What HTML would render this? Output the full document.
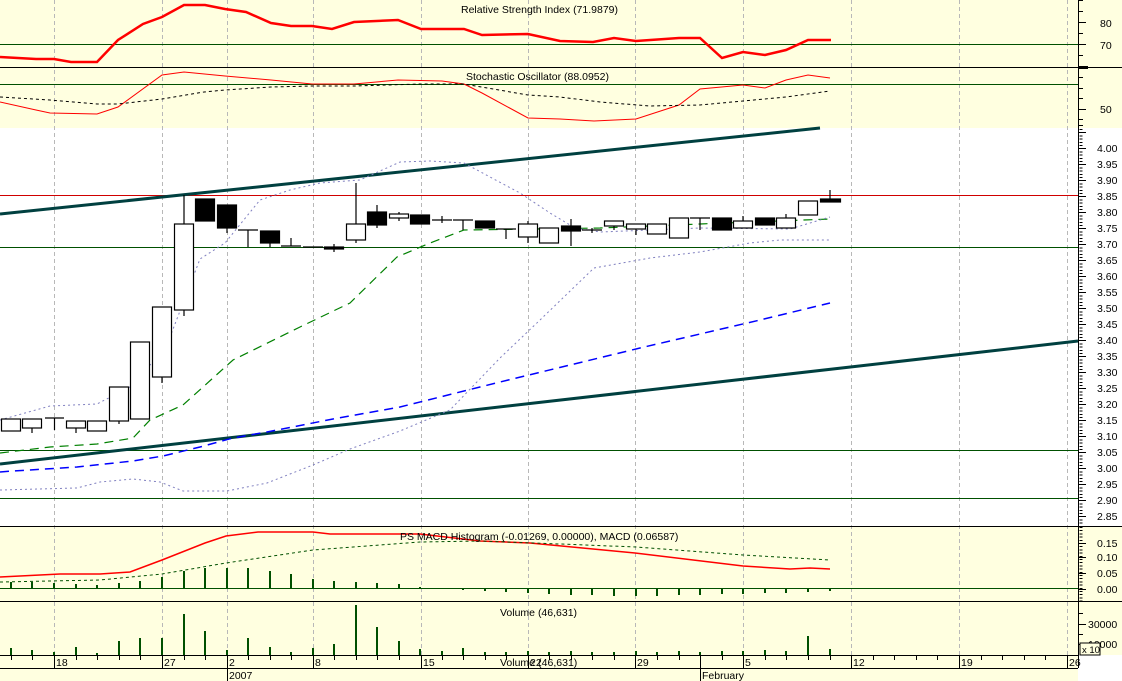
<!DOCTYPE html>
<html><head><meta charset="utf-8"><style>
html,body{margin:0;padding:0;background:#fff;}
svg{display:block;font-family:"Liberation Sans",Arial,sans-serif;}
text{font-size:10.5px;fill:#000;}
</style></head><body>
<svg width="1122" height="681" viewBox="0 0 1122 681" xmlns="http://www.w3.org/2000/svg">
<!-- backgrounds -->
<rect x="0" y="0" width="1122" height="128" fill="#ffffe0"/>
<rect x="0" y="128" width="1122" height="398" fill="#fff"/>
<rect x="0" y="526" width="1122" height="129" fill="#ffffe0"/>
<rect x="0" y="655" width="1078" height="26" fill="#ffffe0"/>
<rect x="1078" y="655" width="44" height="26" fill="#fff"/>

<!-- grid -->
<g stroke="#b8b8b8" stroke-width="1" stroke-dasharray="4,3" shape-rendering="crispEdges">
<path d="M54.5 0V655M162.5 0V655M227.5 0V655M313.5 0V655M421.5 0V655M528.5 0V655M635.5 0V655M743.5 0V655M851.5 0V655M959.5 0V655M1067.5 0V655"/>
</g>

<!-- horizontal reference lines -->
<g shape-rendering="crispEdges" stroke-width="1">
<path d="M0 44.5H1078M0 84.5H1078M0 247.5H1078M0 450.5H1078M0 498.5H1078M0 588.5H1078" stroke="#005000"/>
<path d="M0 195.5H1078" stroke="#d00000"/>
<path d="M0 67.5H1122M0 526.5H1122M0 601.5H1122M0 655.5H1078M0 668.5H1078" stroke="#000"/>
</g>

<!-- RSI -->
<polyline fill="none" stroke="#ff0000" stroke-width="2.5" points="0,57 36,59 54,59 71,62 97,62 118,40 143,24 162,17 184,5 205,5 225,9 246,12 271,23 291,26 312,26 332,29 354,22 398,20 421,29 464,29 482,35 528,34 560,41 593,42 614,38 636,41 679,38 700,38 722,58 743,52 765,55 786,50 808,40 831,40"/>
<text x="461" y="13">Relative Strength Index (71.9879)</text>

<!-- Stochastic -->
<polyline fill="none" stroke="#ff0000" stroke-width="1" points="0,102 36,110 50,113 97,114 118,107 162,75 184,72 225,76 271,80 312,84 354,84 398,80 442,81 464,84 482,93 528,118 560,119 594,121 636,119 679,105 700,89 743,85 765,88 786,80 808,75 830,78"/>
<polyline fill="none" stroke="#000" stroke-width="1" stroke-dasharray="3,3" points="0,97 50,100 97,104 118,104 162,99 204,92 225,90 271,87 312,86 354,86 420,84 464,84 528,95 560,97 600,102 650,106 700,105 743,101 786,97 830,91"/>
<text x="466" y="80">Stochastic Oscillator (88.0952)</text>

<!-- trend lines -->
<line x1="0" y1="214" x2="820" y2="128" stroke="#004040" stroke-width="3"/>
<line x1="0" y1="464" x2="1078" y2="341" stroke="#004040" stroke-width="3"/>

<!-- MAs and bands -->
<polyline fill="none" stroke="#0000ff" stroke-width="1.5" stroke-dasharray="9,6" points="0,472 13,471 77,467 133,461 163,456 200,447 233,438 267,432 333,419 400,407 500,382 640,348 760,320 830,303"/>
<polyline fill="none" stroke="#008000" stroke-width="1.2" stroke-dasharray="9,6" points="0,453 50,447 97,444 133,438 150,420 183,405 233,360 300,327 350,303 397,257 430,243 464,230 600,228 700,224 830,219"/>
<polyline fill="none" stroke="#8080c0" stroke-width="1" stroke-dasharray="2,3" points="0,420 50,406 97,404 130,387 150,365 165,350 200,259 225,243 260,200 290,190 320,183 360,180 400,162 430,161 464,163 490,177 520,193 550,213 575,228 600,232 700,228 790,229 830,217"/>
<polyline fill="none" stroke="#8080c0" stroke-width="1" stroke-dasharray="2,3" points="0,490 77,488 100,482 133,479 160,482 183,491 227,491 267,483 313,465 350,449 400,431 450,410 500,358 540,320 594,268 650,258 700,252 750,243 780,240 830,240"/>

<!-- candles -->
<g stroke="#000" stroke-width="1.2" fill="#fff">
<rect x="1.5" y="419" width="19" height="12"/>
<path d="M32 428V433"/><rect x="22.5" y="419" width="19" height="9"/>
<path d="M45 418H64M54.5 418V430"/>
<path d="M76 428V433"/><rect x="66.5" y="421" width="19" height="7"/>
<rect x="87.5" y="421" width="19" height="10"/>
<path d="M119 421V424"/><rect x="109.5" y="387" width="19" height="34"/>
<rect x="130.5" y="342" width="19" height="77"/>
<path d="M162 377V383"/><rect x="152.5" y="307" width="19" height="70"/>
<path d="M184 195V316"/><rect x="174.5" y="224" width="19" height="86"/>
<rect x="195.5" y="199" width="19" height="22" fill="#000"/>
<path d="M227 228V233"/><rect x="217.5" y="205" width="19" height="23" fill="#000"/>
<path d="M238 230H258M248 230V247"/>
<path d="M270 243V247"/><rect x="260.5" y="231" width="19" height="12" fill="#000"/>
<path d="M281 246H301M291 238V246"/>
<path d="M303 247H323"/>
<path d="M334 244V252"/><rect x="324.5" y="247" width="19" height="2" fill="#000"/>
<path d="M356 183V243"/><rect x="346.5" y="224" width="19" height="16"/>
<path d="M377 205V228"/><rect x="367.5" y="212" width="19" height="13" fill="#000"/>
<path d="M399 212V221"/><rect x="389.5" y="214" width="19" height="4"/>
<rect x="410.5" y="215" width="19" height="9" fill="#000"/>
<path d="M432 220H452M442 216V223"/>
<path d="M453 220H473M463 220V230"/>
<rect x="475.5" y="221" width="19" height="7" fill="#000"/>
<path d="M496 229H516M506 229V239"/>
<path d="M528 221V243"/><rect x="518.5" y="224" width="19" height="13"/>
<rect x="539.5" y="228" width="19" height="15"/>
<path d="M571 219V246"/><rect x="561.5" y="226" width="19" height="5" fill="#000"/>
<path d="M582 230H602M592 228V233"/>
<path d="M614 226V230"/><rect x="604.5" y="221" width="19" height="5"/>
<path d="M636 229V235"/><rect x="626.5" y="224" width="19" height="5"/>
<rect x="647.5" y="224" width="19" height="10"/>
<rect x="669.5" y="218" width="19" height="20"/>
<path d="M690 218H710M700 218V230"/>
<rect x="712.5" y="218" width="19" height="12" fill="#000"/>
<path d="M743 216V221"/><rect x="733.5" y="221" width="19" height="7"/>
<rect x="755.5" y="218" width="19" height="7" fill="#000"/>
<path d="M786 214V218"/><rect x="776.5" y="218" width="19" height="10"/>
<rect x="798.5" y="201" width="19" height="14"/>
<path d="M830 190V199"/><rect x="820.5" y="199" width="20" height="3" fill="#000"/>
</g>

<!-- MACD -->
<polyline fill="none" stroke="#ff0000" stroke-width="1.5" points="0,577 60,574 100,574 130,572 162,560 205,543 226,536 258,532 313,532 330,534 420,534 480,541 530,543 635,553 743,566 790,569 810,568 830,569"/>
<polyline fill="none" stroke="#005000" stroke-width="1" stroke-dasharray="3,3" points="0,582 100,580 162,574 226,563 313,550 420,542 480,541 560,544 636,547 743,555 830,560"/>
<g stroke="#005000" stroke-width="2">
<path d="M11 588V582M32 588V582M54 588V583M76 588V584M97 588V585M119 588V583M140 588V581M162 588V577M184 588V571M205 588V568M227 588V568M248 588V568M270 588V571M291 588V574M313 588V579M334 588V581M356 588V582M377 588V583M399 588V584M420 588V587M442 588V589M463 588V590M485 588V591M506 588V592M528 588V593M549 588V594M571 588V595M592 588V595M614 588V596M636 588V596M657 588V596M679 588V595M700 588V595M722 588V594M743 588V594M765 588V593M786 588V593M808 588V592M830 588V591"/>
</g>
<text x="400" y="540">PS MACD Histogram (-0.01269, 0.00000), MACD (0.06587)</text>

<!-- Volume -->
<g stroke="#005000" stroke-width="2">
<path d="M11 655V648M32 655V650M54 655V652M76 655V647M97 655V653M119 655V641M140 655V638M162 655V638M184 655V614M205 655V631M227 655V650M248 655V638M270 655V647M291 655V652M313 655V648M334 655V644M356 655V605M377 655V627M399 655V641M420 655V649M442 655V651M463 655V648M485 655V652M506 655V652M528 655V651M549 655V652M571 655V651M592 655V652M614 655V652M636 655V651M657 655V652M679 655V651M700 655V652M722 655V651M743 655V651M765 655V650M786 655V651M808 655V636M830 655V649"/>
</g>
<text x="500" y="616">Volume (46,631)</text>

<!-- date axis -->
<g stroke="#000" stroke-width="1" shape-rendering="crispEdges">
<path d="M11.5 655V660M32.5 655V660M76.5 655V660M97.5 655V660M119.5 655V660M140.5 655V660M184.5 655V660M205.5 655V660M248.5 655V660M270.5 655V660M291.5 655V660M334.5 655V660M356.5 655V660M377.5 655V660M399.5 655V660M442.5 655V660M463.5 655V660M485.5 655V660M506.5 655V660M549.5 655V660M571.5 655V660M592.5 655V660M614.5 655V660M657.5 655V660M679.5 655V660M700.5 655V660M722.5 655V660M765.5 655V660M786.5 655V660M808.5 655V660M830.5 655V660M873.5 655V660M894.5 655V660M916.5 655V660M937.5 655V660M981.5 655V660M1002.5 655V660M1024.5 655V660M1045.5 655V660"/>
<path d="M54.5 655V668M162.5 655V668M227.5 655V681M313.5 655V668M421.5 655V668M528.5 655V668M635.5 655V668M700.5 655V681M743.5 655V668M851.5 655V668M959.5 655V668M1067.5 655V668"/>
</g>
<text x="56" y="666">18</text><text x="164" y="666">27</text><text x="229" y="666">2</text><text x="315" y="666">8</text><text x="423" y="666">15</text><text x="500" y="666">Volume (</text><text x="530" y="666">2246,631)</text><text x="637" y="666">29</text><text x="745" y="666">5</text><text x="853" y="666">12</text><text x="961" y="666">19</text><text x="1069" y="666">26</text>
<text x="229" y="679">2007</text><text x="702" y="679">February</text>

<!-- right axis -->
<g stroke="#000" shape-rendering="crispEdges">
<path d="M1078.5 0V668" stroke-width="1"/>
<!-- RSI/stoch ticks -->
<path d="M1079 0.5H1083M1079 11.5H1083M1079 22.5H1086M1079 33.5H1083M1079 44.5H1086M1079 55.5H1083M1079 77.5H1083M1079 88.5H1083M1079 98.5H1083M1079 109.5H1086M1079 119.5H1083M1079 125.5H1083"/>
<rect x="1079" y="66" width="9" height="3" fill="#000" stroke="none"/>
<!-- price ticks -->
<path d="M1081 129V526" stroke-width="3" stroke-dasharray="1,2.2"/>
<path d="M1082.5 132V526" stroke-width="7" stroke-dasharray="1,15"/>
<!-- macd ticks -->
<path d="M1081 527V601" stroke-width="3" stroke-dasharray="1,2.2"/>
<path d="M1079 543.5H1086M1079 557.5H1086M1079 573.5H1086M1079 589.5H1086"/>
<!-- volume ticks -->
<path d="M1079 613.5H1083M1079 624.5H1086M1079 634.5H1083M1079 644.5H1086"/>
</g>
<text x="1100" y="27">80</text><text x="1100" y="49">70</text><text x="1100" y="113">50</text>
<g>
<text x="1097" y="152">4.00</text><text x="1097" y="168">3.95</text><text x="1097" y="184">3.90</text><text x="1097" y="200">3.85</text><text x="1097" y="216">3.80</text><text x="1097" y="232">3.75</text><text x="1097" y="248">3.70</text><text x="1097" y="264">3.65</text><text x="1097" y="280">3.60</text><text x="1097" y="296">3.55</text><text x="1097" y="312">3.50</text><text x="1097" y="328">3.45</text><text x="1097" y="344">3.40</text><text x="1097" y="360">3.35</text><text x="1097" y="376">3.30</text><text x="1097" y="392">3.25</text><text x="1097" y="408">3.20</text><text x="1097" y="424">3.15</text><text x="1097" y="440">3.10</text><text x="1097" y="456">3.05</text><text x="1097" y="472">3.00</text><text x="1097" y="488">2.95</text><text x="1097" y="504">2.90</text><text x="1097" y="520">2.85</text>
</g>
<text x="1097" y="547">0.15</text><text x="1097" y="561">0.10</text><text x="1097" y="577">0.05</text><text x="1097" y="593">0.00</text>
<text x="1088" y="628">30000</text><text x="1088" y="648">10000</text>
<rect x="1080" y="643" width="20" height="12" fill="#ffffe0" stroke="#000" stroke-width="1"/>
<text x="1082" y="653" style="font-size:9.5px">x 10</text>
</svg>
</body></html>
